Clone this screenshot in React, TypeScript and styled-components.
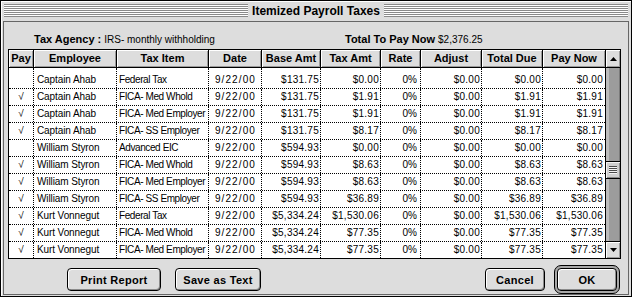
import React from "react";
import styled, { createGlobalStyle } from "styled-components";

const GlobalStyle = createGlobalStyle`
  html, body { margin: 0; padding: 0; background: #ffffff; }
  body { font-family: "Liberation Sans", Arial, sans-serif; color: #000; }
  * { box-sizing: border-box; }
`;

const COLS = "25px 83px 92px 53px 59px 60px 40px 61px 61px 62px";

const Window = styled.div`
  width: 632px;
  height: 297px;
  border: 1px solid #000;
  background: #dddddd;
  display: flex;
  flex-direction: column;
  box-shadow: inset 1px 1px 0 #ffffff;
`;

const TitleBar = styled.div`
  height: 20px;
  display: flex;
  align-items: center;
  padding: 0 3px;
`;

const Stripes = styled.div`
  flex: 1;
  height: 13px;
  align-self: flex-start;
  margin-top: 3px;
  background: repeating-linear-gradient(
    to bottom,
    #8a8a8a 0px,
    #8a8a8a 1px,
    #ffffff 1px,
    #ffffff 2px
  );
`;

const Title = styled.div`
  font-weight: bold;
  font-size: 12px;
  line-height: 20px;
  padding: 0 4px 0 4px;
  white-space: nowrap;
`;

const Body = styled.div`
  flex: 1;
  margin: 0 2px 1px 2px;
  border: 1px solid #666666;
  display: flex;
  flex-direction: column;
  padding: 0 7px 0 4px;
`;

const InfoRow = styled.div`
  margin-top: 9px;
  margin-bottom: 2px;
  height: 16px;
  display: flex;
  align-items: center;
  padding-left: 26px;
  white-space: nowrap;
`;

const InfoGroup = styled.div<{ $width?: number }>`
  display: flex;
  align-items: baseline;
  gap: 3px;
  ${(p) => (p.$width ? `width: ${p.$width}px;` : "")}
`;

const InfoLabel = styled.span`
  font-weight: bold;
  font-size: 11px;
`;

const InfoValue = styled.span`
  font-size: 10px;
`;

const TableFrame = styled.div`
  width: 613px;
  height: 210px;
  border: 1px solid #000;
  display: flex;
  background: #ffffff;
`;

const ListPane = styled.div`
  width: 596px;
  display: flex;
  flex-direction: column;
`;

const HeaderRow = styled.div`
  display: grid;
  grid-template-columns: ${COLS};
  height: 18px;
  border-bottom: 1px solid #000;
  background: #dddddd;
`;

const HeaderCell = styled.div<{ $last?: boolean }>`
  font-weight: bold;
  font-size: 11px;
  line-height: 17px;
  text-align: center;
  white-space: nowrap;
  overflow: hidden;
  background: #dddddd;
  box-shadow: inset 1px 1px 0 #ffffff, inset -1px -1px 0 #9a9a9a;
  border-right: ${(p) => (p.$last ? "none" : "1px solid #000")};
`;

const ListBody = styled.div`
  flex: 1;
  overflow: hidden;
  background: #ffffff;
`;

const Row = styled.div<{ $first?: boolean; $last?: boolean }>`
  display: grid;
  grid-template-columns: ${COLS};
  height: ${(p) => (p.$first ? 21 : p.$last ? 16 : 17)}px;
  border-bottom: ${(p) => (p.$last ? "none" : "1px dotted #000")};
`;

type Align = "left" | "right" | "center";

const Cell = styled.div<{ $align: Align; $last?: boolean; $pad: number; $ls: number; $size: number }>`
  display: flex;
  align-items: flex-end;
  justify-content: ${(p) =>
    p.$align === "left" ? "flex-start" : p.$align === "right" ? "flex-end" : "center"};
  padding: ${(p) =>
    p.$align === "left" ? `0 0 0 ${p.$pad}px` : p.$align === "right" ? `0 ${p.$pad}px 0 0` : "0"};
  border-right: ${(p) => (p.$last ? "none" : "1px dotted #000")};
  font-size: ${(p) => p.$size}px;
  letter-spacing: ${(p) => p.$ls}px;
  line-height: 16px;
  white-space: nowrap;
  overflow: hidden;
`;

const ScrollBar = styled.div`
  width: 15px;
  border-left: 1px solid #000;
  display: flex;
  flex-direction: column;
`;

const ArrowBox = styled.div<{ $dir: "up" | "down" }>`
  height: ${(p) => (p.$dir === "up" ? 18 : 17)}px;
  ${(p) => (p.$dir === "up" ? "border-bottom: 1px solid #000;" : "border-top: 1px solid #000;")}
  background: #dddddd;
  box-shadow: inset 1px 1px 0 #ffffff, inset -1px -1px 0 #9a9a9a;
  display: flex;
  align-items: center;
  justify-content: center;
`;

const Track = styled.div`
  flex: 1;
  background: #9c9c9c;
  box-shadow: inset 3px 0 0 #bcbcbc, inset -1px 0 0 #7a7a7a;
  display: flex;
  flex-direction: column;
`;

const Thumb = styled.div`
  height: 18px;
  border-top: 1px solid #000;
  border-bottom: 1px solid #000;
  background: #cfcfcf;
  box-shadow: inset 1px 1px 0 #f2f2f2, inset -1px -1px 0 #8a8a8a;
  display: flex;
  align-items: center;
  justify-content: center;
`;

const Grip = styled.div`
  width: 8px;
  height: 8px;
  background: repeating-linear-gradient(
    to bottom,
    #4a4a4a 0px,
    #4a4a4a 1px,
    #f4f4f4 1px,
    #f4f4f4 2px
  );
`;

const ButtonRow = styled.div`
  margin-top: 6px;
  height: 29px;
  display: flex;
  align-items: center;
  padding: 0 1px 0 59px;
`;

const Spacer = styled.div`
  flex: 1;
`;

const Button = styled.button<{ $width: number; $gap?: number }>`
  width: ${(p) => p.$width}px;
  height: 23px;
  margin: 0 ${(p) => p.$gap ?? 0}px 0 0;
  padding: 0;
  border: 1px solid #000;
  border-radius: 4px;
  background: #dddddd;
  box-shadow: inset 1px 1px 0 #ffffff, inset -1px -1px 0 #8a8a8a;
  font-family: "Liberation Sans", Arial, sans-serif;
  font-weight: bold;
  font-size: 11px;
  letter-spacing: 0.3px;
  color: #000;
  cursor: default;
`;

const DefaultRing = styled.div`
  width: 66px;
  height: 29px;
  border: 1px solid #000;
  border-radius: 7px;
  padding: 2px;
  background: #a8a8a8;
  display: flex;
`;

const Triangle = ({ dir }: { dir: "up" | "down" }) => (
  <svg width="7" height="4" viewBox="0 0 7 4">
    <polygon points={dir === "up" ? "3.5,0 7,4 0,4" : "0,0 7,0 3.5,4"} fill="#000" />
  </svg>
);

type ColDef = { title: string; align: Align; pad: number; ls: number; size: number };

const columns: ColDef[] = [
  { title: "Pay", align: "center", pad: 0, ls: 0, size: 10 },
  { title: "Employee", align: "left", pad: 3, ls: -0.1, size: 10 },
  { title: "Tax Item", align: "left", pad: 2, ls: -0.4, size: 10 },
  { title: "Date", align: "right", pad: 5, ls: 1.1, size: 10 },
  { title: "Base Amt", align: "right", pad: 1, ls: 0.25, size: 10 },
  { title: "Tax Amt", align: "right", pad: 1, ls: 0.25, size: 10 },
  { title: "Rate", align: "right", pad: 3, ls: 0, size: 10 },
  { title: "Adjust", align: "right", pad: 1, ls: 0.25, size: 10 },
  { title: "Total Due", align: "right", pad: 1, ls: 0.25, size: 10 },
  { title: "Pay Now", align: "right", pad: 2, ls: 0.25, size: 10 },
];

const rows: string[][] = [
  ["", "Captain Ahab", "Federal Tax", "9/22/00", "$131.75", "$0.00", "0%", "$0.00", "$0.00", "$0.00"],
  ["√", "Captain Ahab", "FICA- Med Whold", "9/22/00", "$131.75", "$1.91", "0%", "$0.00", "$1.91", "$1.91"],
  ["√", "Captain Ahab", "FICA- Med Employer", "9/22/00", "$131.75", "$1.91", "0%", "$0.00", "$1.91", "$1.91"],
  ["√", "Captain Ahab", "FICA- SS Employer", "9/22/00", "$131.75", "$8.17", "0%", "$0.00", "$8.17", "$8.17"],
  ["", "William Styron", "Advanced EIC", "9/22/00", "$594.93", "$0.00", "0%", "$0.00", "$0.00", "$0.00"],
  ["√", "William Styron", "FICA- Med Whold", "9/22/00", "$594.93", "$8.63", "0%", "$0.00", "$8.63", "$8.63"],
  ["√", "William Styron", "FICA- Med Employer", "9/22/00", "$594.93", "$8.63", "0%", "$0.00", "$8.63", "$8.63"],
  ["√", "William Styron", "FICA- SS Employer", "9/22/00", "$594.93", "$36.89", "0%", "$0.00", "$36.89", "$36.89"],
  ["√", "Kurt Vonnegut", "Federal Tax", "9/22/00", "$5,334.24", "$1,530.06", "0%", "$0.00", "$1,530.06", "$1,530.06"],
  ["√", "Kurt Vonnegut", "FICA- Med Whold", "9/22/00", "$5,334.24", "$77.35", "0%", "$0.00", "$77.35", "$77.35"],
  ["√", "Kurt Vonnegut", "FICA- Med Employer", "9/22/00", "$5,334.24", "$77.35", "0%", "$0.00", "$77.35", "$77.35"],
];

export default function App() {
  const thumbOffset = 93;
  return (
    <>
      <GlobalStyle />
      <Window>
        <TitleBar>
          <Stripes />
          <Title>Itemized Payroll Taxes</Title>
          <Stripes />
        </TitleBar>
        <Body>
          <InfoRow>
            <InfoGroup $width={311}>
              <InfoLabel>Tax Agency :</InfoLabel>
              <InfoValue>IRS- monthly withholding</InfoValue>
            </InfoGroup>
            <InfoGroup>
              <InfoLabel>Total To Pay Now</InfoLabel>
              <InfoValue>$2,376.25</InfoValue>
            </InfoGroup>
          </InfoRow>
          <TableFrame>
            <ListPane>
              <HeaderRow>
                {columns.map((c, i) => (
                  <HeaderCell key={c.title} $last={i === columns.length - 1}>
                    {c.title}
                  </HeaderCell>
                ))}
              </HeaderRow>
              <ListBody>
                {rows.map((r, ri) => (
                  <Row key={ri} $first={ri === 0} $last={ri === rows.length - 1}>
                    {r.map((v, ci) => {
                      const c = columns[ci];
                      return (
                        <Cell
                          key={ci}
                          $align={c.align}
                          $pad={c.pad}
                          $ls={c.ls}
                          $size={c.size}
                          $last={ci === columns.length - 1}
                        >
                          {v}
                        </Cell>
                      );
                    })}
                  </Row>
                ))}
              </ListBody>
            </ListPane>
            <ScrollBar>
              <ArrowBox $dir="up">
                <Triangle dir="up" />
              </ArrowBox>
              <Track>
                <Thumb style={{ marginTop: thumbOffset }}>
                  <Grip />
                </Thumb>
              </Track>
              <ArrowBox $dir="down">
                <Triangle dir="down" />
              </ArrowBox>
            </ScrollBar>
          </TableFrame>
          <ButtonRow>
            <Button $width={94} $gap={14}>Print Report</Button>
            <Button $width={86}>Save as Text</Button>
            <Spacer />
            <Button $width={60} $gap={9}>Cancel</Button>
            <DefaultRing>
              <Button $width={60}>OK</Button>
            </DefaultRing>
          </ButtonRow>
        </Body>
      </Window>
    </>
  );
}
